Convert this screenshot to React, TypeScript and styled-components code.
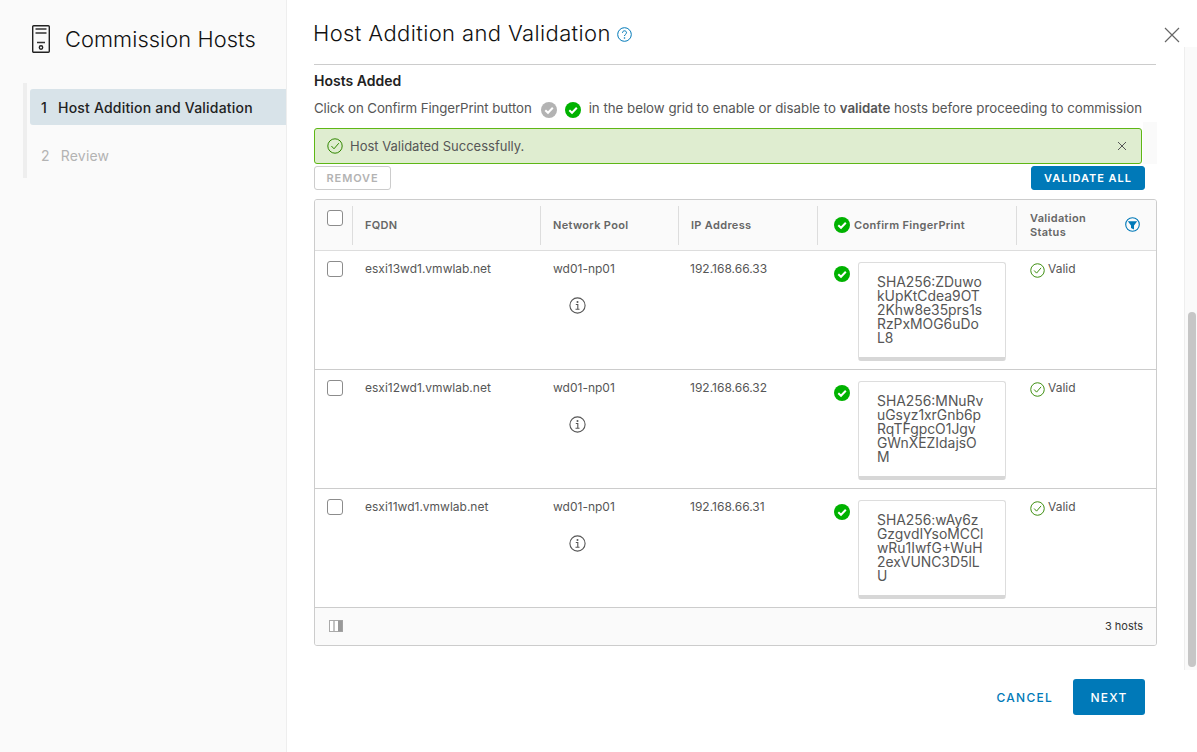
import * as React from "react";
import styled, { createGlobalStyle } from "styled-components";

const HOSTS = [
  {
    fqdn: "esxi13wd1.vmwlab.net",
    pool: "wd01-np01",
    ip: "192.168.66.33",
    fingerprint: "SHA256:ZDuwo\nkUpKtCdea9OT\n2Khw8e35prs1s\nRzPxMOG6uDo\nL8"
  },
  {
    fqdn: "esxi12wd1.vmwlab.net",
    pool: "wd01-np01",
    ip: "192.168.66.32",
    fingerprint: "SHA256:MNuRv\nuGsyz1xrGnb6p\nRqTFgpcO1Jgv\nGWnXEZIdajsO\nM"
  },
  {
    fqdn: "esxi11wd1.vmwlab.net",
    pool: "wd01-np01",
    ip: "192.168.66.31",
    fingerprint: "SHA256:wAy6z\nGzgvdIYsoMCCl\nwRu1IwfG+WuH\n2exVUNC3D5lL\nU"
  }
];

const COLUMNS = "37px 188px 138px 139px 199px 1fr";

const GlobalStyle = createGlobalStyle`
  html, body {
    margin: 0;
    height: 100%;
    overflow: hidden;
    background: #fff;
  }
  body {
    font-family: Inter, "Noto Sans", sans-serif;
    color: #565656;
  }
  * {
    box-sizing: border-box;
  }
`;

const Page = styled.div`
  display: flex;
  width: 1197px;
  height: 752px;
  position: relative;
`;

const Sidebar = styled.aside`
  width: 287px;
  flex-shrink: 0;
  background: #fafafa;
  border-right: 1px solid #eee;
  padding: 24px 0 0 23px;
`;

const SidebarHeader = styled.div`
  display: flex;
  align-items: center;
  gap: 15px;
  padding-left: 9px;
  height: 30px;
`;

const SidebarTitle = styled.h1`
  margin: 0;
  font-size: 21.8px;
  font-weight: 300;
  color: #111;
  letter-spacing: 0.1px;
`;

const Steps = styled.nav`
  margin-top: 29px;
  border-left: 4px solid #eee;
  padding: 6px 0 0 3px;
  height: 95px;
`;

const Step = styled.div<{ $active?: boolean }>`
  height: 36px;
  margin-bottom: 12px;
  padding-left: 11px;
  display: flex;
  align-items: center;
  gap: 11px;
  font-size: 14px;
  letter-spacing: 0.2px;
  border-radius: 3px 0 0 3px;
  background: ${p => (p.$active ? "#d8e3e9" : "transparent")};
  color: ${p => (p.$active ? "#222" : "#b3b3b3")};
  font-weight: ${p => (p.$active ? 500 : 400)};
`;

const Main = styled.main`
  flex: 1;
  display: flex;
  min-width: 0;
`;

const Content = styled.div`
  width: 897px;
  padding: 0 0 0 27px;
  flex-shrink: 0;
`;

const TitleRow = styled.div`
  height: 65px;
  margin-right: 28px;
  padding-top: 19px;
  border-bottom: 1px solid #ccc;
  display: flex;
  align-items: flex-start;
  gap: 6px;
`;

const Title = styled.h2`
  margin: 0 0 0 -1px;
  font-size: 22px;
  line-height: 28px;
  font-weight: 300;
  letter-spacing: 0.38px;
  color: #111;
`;

const HelpIcon = styled.svg`
  margin-top: 8px;
`;

const CloseButton = styled.button`
  position: absolute;
  top: 27px;
  right: 17px;
  width: 16px;
  height: 16px;
  padding: 0;
  border: 0;
  background: none;
  display: flex;
`;

const SectionTitle = styled.h3`
  margin: 8px 0 0;
  font-size: 14px;
  line-height: 16px;
  font-weight: 600;
  color: #222;
`;

const Hint = styled.p`
  margin: 9px 0 0;
  height: 20px;
  display: flex;
  align-items: center;
  font-size: 13.27px;
  color: #565656;
  white-space: pre;
  b {
    font-weight: 600;
  }
`;

const HintLead = styled.span`
  letter-spacing: -0.1px;
`;

const HintIcons = styled.span`
  display: inline-flex;
  gap: 8px;
  margin: 4px 8px 0 9px;
`;

const AlertRow = styled.div`
  display: flex;
  margin-top: 4px;
  margin-right: 27px;
  height: 42px;
  padding-top: 6px;
  background: linear-gradient(to right, #fff 829px, #fafafa 829px);
`;

const Alert = styled.div`
  width: 828px;
  height: 36px;
  background: #dfedd0;
  border: 1px solid #5eb715;
  border-radius: 3px;
  display: flex;
  align-items: center;
  gap: 7px;
  padding: 0 14px 0 12px;
  font-size: 13px;
  color: #565656;
`;

const AlertText = styled.span`
  flex: 1;
`;

const ActionRow = styled.div`
  display: flex;
  justify-content: space-between;
  margin: 2px 39px 0 0;
`;

const SmallButton = styled.button<{ $primary?: boolean }>`
  height: 24px;
  padding: 0 ${p => (p.$primary ? "12px" : "11.5px")};
  font-family: inherit;
  font-size: 11px;
  font-weight: 600;
  letter-spacing: ${p => (p.$primary ? "0.98px" : "0.9px")};
  border-radius: 3px;
  border: 1px solid ${p => (p.$primary ? "#0079b8" : "#ccc")};
  background: ${p => (p.$primary ? "#0079b8" : "#fff")};
  color: ${p => (p.$primary ? "#fff" : "#b3b3b3")};
`;

const Grid = styled.section`
  margin: 9px 27px 0 0;
  width: 843px;
  height: 447px;
  border: 1px solid #ccc;
  border-radius: 3px;
  overflow: hidden;
  display: flex;
  flex-direction: column;
`;

const HeaderRow = styled.div`
  display: grid;
  grid-template-columns: ${COLUMNS};
  height: 51px;
  background: #fafafa;
  border-bottom: 1px solid #ddd;
  padding-top: 6px;
`;

const HeaderCell = styled.div<{ $first?: boolean }>`
  height: 39px;
  padding: 0 0 2px 12px;
  display: flex;
  align-items: center;
  gap: 4px;
  font-size: 11px;
  line-height: 14px;
  font-weight: 600;
  letter-spacing: 0.32px;
  color: #666;
  border-left: ${p => (p.$first ? "0" : "1px solid #ddd")};
`;

const FingerprintHeader = styled(HeaderCell)`
  padding-left: 16px;
`;

const StatusHeader = styled(HeaderCell)`
  justify-content: space-between;
  padding-left: 13px;
  padding-right: 16px;
`;

const CheckHeader = styled(HeaderCell)`
  align-items: flex-start;
  padding-top: 4px;
`;

const Box = styled.span`
  display: block;
  width: 16px;
  height: 16px;
  background: #fff;
  border: 1px solid #8c8c8c;
  border-radius: 3px;
`;

const Row = styled.div`
  display: grid;
  grid-template-columns: ${COLUMNS};
  height: 119px;
  border-bottom: 1px solid #ccc;
  font-size: 12px;
  line-height: 18px;
  color: #565656;
`;

const Cell = styled.div`
  padding: 9px 0 0 13px;
`;

const IpCell = styled(Cell)`
  padding-left: 12px;
`;

const CheckCell = styled(Cell)`
  padding: 10px 0 0 12px;
`;

const InfoIcon = styled.svg`
  display: block;
  margin: 19px 0 0 16px;
`;

const FingerprintCell = styled(Cell)`
  display: flex;
  padding: 15px 0 0 17px;
  gap: 8px;
  align-items: flex-start;
`;

const FingerprintCard = styled.div`
  width: 148px;
  height: 99px;
  margin-top: -4px;
  background: #fff;
  border: 1px solid #ddd;
  border-bottom: 4px solid #d7d7d7;
  border-radius: 3px;
  padding: 12px 0 0 18px;
  font-size: 13.9px;
  line-height: 14px;
  color: #565656;
  white-space: pre-line;
`;

const ValidCell = styled(Cell)`
  display: flex;
  align-items: flex-start;
  gap: 3px;
  padding: 9px 0 0 14px;
`;

const ValidIcon = styled.svg`
  margin-top: 3px;
`;

const Footer = styled.div`
  flex: 1;
  background: #fafafa;
  display: flex;
  align-items: center;
  justify-content: space-between;
  padding: 0 13px 2px 14px;
  font-size: 11px;
  color: #333;
`;

const Actions = styled.div`
  display: flex;
  justify-content: flex-end;
  align-items: center;
  gap: 20px;
  margin: 33px 39px 0 0;
`;

const Cancel = styled.button`
  border: 0;
  background: none;
  padding: 0;
  font-family: inherit;
  font-size: 12px;
  font-weight: 500;
  letter-spacing: 1.25px;
  color: #0079b8;
`;

const Next = styled.button`
  width: 72px;
  height: 36px;
  border: 0;
  border-radius: 3px;
  background: #0079b8;
  color: #fff;
  font-family: inherit;
  font-size: 12px;
  font-weight: 500;
  letter-spacing: 1.25px;
`;

const ScrollTrack = styled.div`
  margin: 47px 0 0 0;
  width: 13px;
  height: 623px;
  background: #fafafa;
  border-left: 1px solid #eee;
  padding: 265px 1px 0 3px;
`;

const ScrollThumb = styled.div`
  height: 355px;
  border-radius: 4px;
  background: #c6c6c6;
`;

const CheckFilled = ({ color = "#00b200" }: { color?: string }) => (
  <svg width="16" height="16" viewBox="0 0 16 16">
    <circle cx="8" cy="8" r="8" fill={color} />
    <path d="M4.3 8.2 7 10.8l4.8-5" fill="none" stroke="#fff" strokeWidth="2" />
  </svg>
);

const CheckOutline = () => (
  <svg width="16" height="16" viewBox="0 0 16 16">
    <circle cx="8" cy="8" r="7.2" fill="none" stroke="#318700" strokeWidth="1" />
    <path d="M4.4 8 7 10.8l4.8-5.6" fill="none" stroke="#318700" strokeWidth="1" />
  </svg>
);

const ServerIcon = () => (
  <svg width="18" height="28" viewBox="0 0 18 28">
    <rect x="0.7" y="0.7" width="16.6" height="26.6" rx="1" fill="none" stroke="#222" strokeWidth="1.4" />
    <path d="M3.5 4h11M3.5 8h11M5 17.5h8" stroke="#333" strokeWidth="1.3" />
    <circle cx="9" cy="22.5" r="1.7" fill="none" stroke="#222" strokeWidth="1.4" />
  </svg>
);

const FilterIcon = () => (
  <svg width="15" height="15" viewBox="0 0 15 15">
    <circle cx="7.5" cy="7.5" r="6.8" fill="none" stroke="#0079b8" strokeWidth="1.1" />
    <path d="M2.8 4.3h9.4L9 8.4v4l-3-1.3V8.4z" fill="#0079b8" />
  </svg>
);

const ColumnsIcon = () => (
  <svg width="14" height="12" viewBox="0 0 14 12">
    <rect x="0.5" y="0.5" width="13" height="11" fill="#fff" stroke="#aaa" />
    <path d="M5 0.5v11" stroke="#aaa" strokeWidth="1.4" />
    <rect x="9" y="0.5" width="4.5" height="11" fill="#999" />
  </svg>
);

export default function App() {
  return (
    <Page>
      <GlobalStyle />
      <Sidebar>
        <SidebarHeader>
          <ServerIcon />
          <SidebarTitle>Commission Hosts</SidebarTitle>
        </SidebarHeader>
        <Steps>
          <Step $active>
            <span>1</span>
            <span>Host Addition and Validation</span>
          </Step>
          <Step>
            <span>2</span>
            <span>Review</span>
          </Step>
        </Steps>
      </Sidebar>
      <Main>
        <Content>
          <TitleRow>
            <Title>Host Addition and Validation</Title>
            <HelpIcon width="15" height="15" viewBox="0 0 15 15">
              <circle cx="7.5" cy="7.5" r="6.8" fill="none" stroke="#0079b8" />
              <path
                d="M5.5 5.8c0-1.2.9-2 2-2s2 .8 2 1.9c0 1.6-2 1.6-2 3.3"
                fill="none"
                stroke="#0079b8"
              />
              <circle cx="7.5" cy="11" r=".8" fill="#0079b8" />
            </HelpIcon>
          </TitleRow>
          <SectionTitle>Hosts Added</SectionTitle>
          <Hint>
            <HintLead>Click on Confirm FingerPrint button</HintLead>
            <HintIcons>
              <CheckFilled color="#b3b3b3" />
              <CheckFilled />
            </HintIcons>
            in the below grid to enable or disable to <b>validate</b> hosts before proceeding to commission
          </Hint>
          <AlertRow>
            <Alert>
              <CheckOutline />
              <AlertText>Host Validated Successfully.</AlertText>
              <svg width="10" height="10" viewBox="0 0 10 10">
                <path d="M1 1l8 8M9 1l-8 8" stroke="#565656" />
              </svg>
            </Alert>
          </AlertRow>
          <ActionRow>
            <SmallButton>REMOVE</SmallButton>
            <SmallButton $primary>VALIDATE ALL</SmallButton>
          </ActionRow>
          <Grid>
            <HeaderRow>
              <CheckHeader $first>
                <Box />
              </CheckHeader>
              <HeaderCell>FQDN</HeaderCell>
              <HeaderCell>Network Pool</HeaderCell>
              <HeaderCell>IP Address</HeaderCell>
              <FingerprintHeader>
                <CheckFilled />
                Confirm FingerPrint
              </FingerprintHeader>
              <StatusHeader>
                <span>
                  Validation
                  <br />
                  Status
                </span>
                <FilterIcon />
              </StatusHeader>
            </HeaderRow>
            {HOSTS.map(host => (
              <Row key={host.fqdn}>
                <CheckCell>
                  <Box />
                </CheckCell>
                <Cell>{host.fqdn}</Cell>
                <Cell>
                  {host.pool}
                  <InfoIcon width="17" height="17" viewBox="0 0 17 17">
                    <circle cx="8.5" cy="8.5" r="7.6" fill="none" stroke="#565656" strokeWidth="1.1" />
                    <path d="M6.8 7.5h2v4.5M6.5 12.2h4" fill="none" stroke="#565656" strokeWidth="1.1" />
                    <circle cx="8.5" cy="5" r="1" fill="#565656" />
                  </InfoIcon>
                </Cell>
                <IpCell>{host.ip}</IpCell>
                <FingerprintCell>
                  <CheckFilled />
                  <FingerprintCard>{host.fingerprint}</FingerprintCard>
                </FingerprintCell>
                <ValidCell>
                  <ValidIcon width="15" height="15" viewBox="0 0 16 16">
                    <circle cx="8" cy="8" r="7.2" fill="none" stroke="#318700" />
                    <path d="M4.4 8 7 10.8l4.8-5.6" fill="none" stroke="#318700" />
                  </ValidIcon>
                  Valid
                </ValidCell>
              </Row>
            ))}
            <Footer>
              <ColumnsIcon />
              <span>3 hosts</span>
            </Footer>
          </Grid>
          <Actions>
            <Cancel>CANCEL</Cancel>
            <Next>NEXT</Next>
          </Actions>
        </Content>
        <ScrollTrack>
          <ScrollThumb />
        </ScrollTrack>
        <CloseButton aria-label="Close">
          <svg width="16" height="16" viewBox="0 0 16 16">
            <path d="M1 1l14 14M15 1L1 15" stroke="#666" strokeWidth="1.2" />
          </svg>
        </CloseButton>
      </Main>
    </Page>
  );
}
